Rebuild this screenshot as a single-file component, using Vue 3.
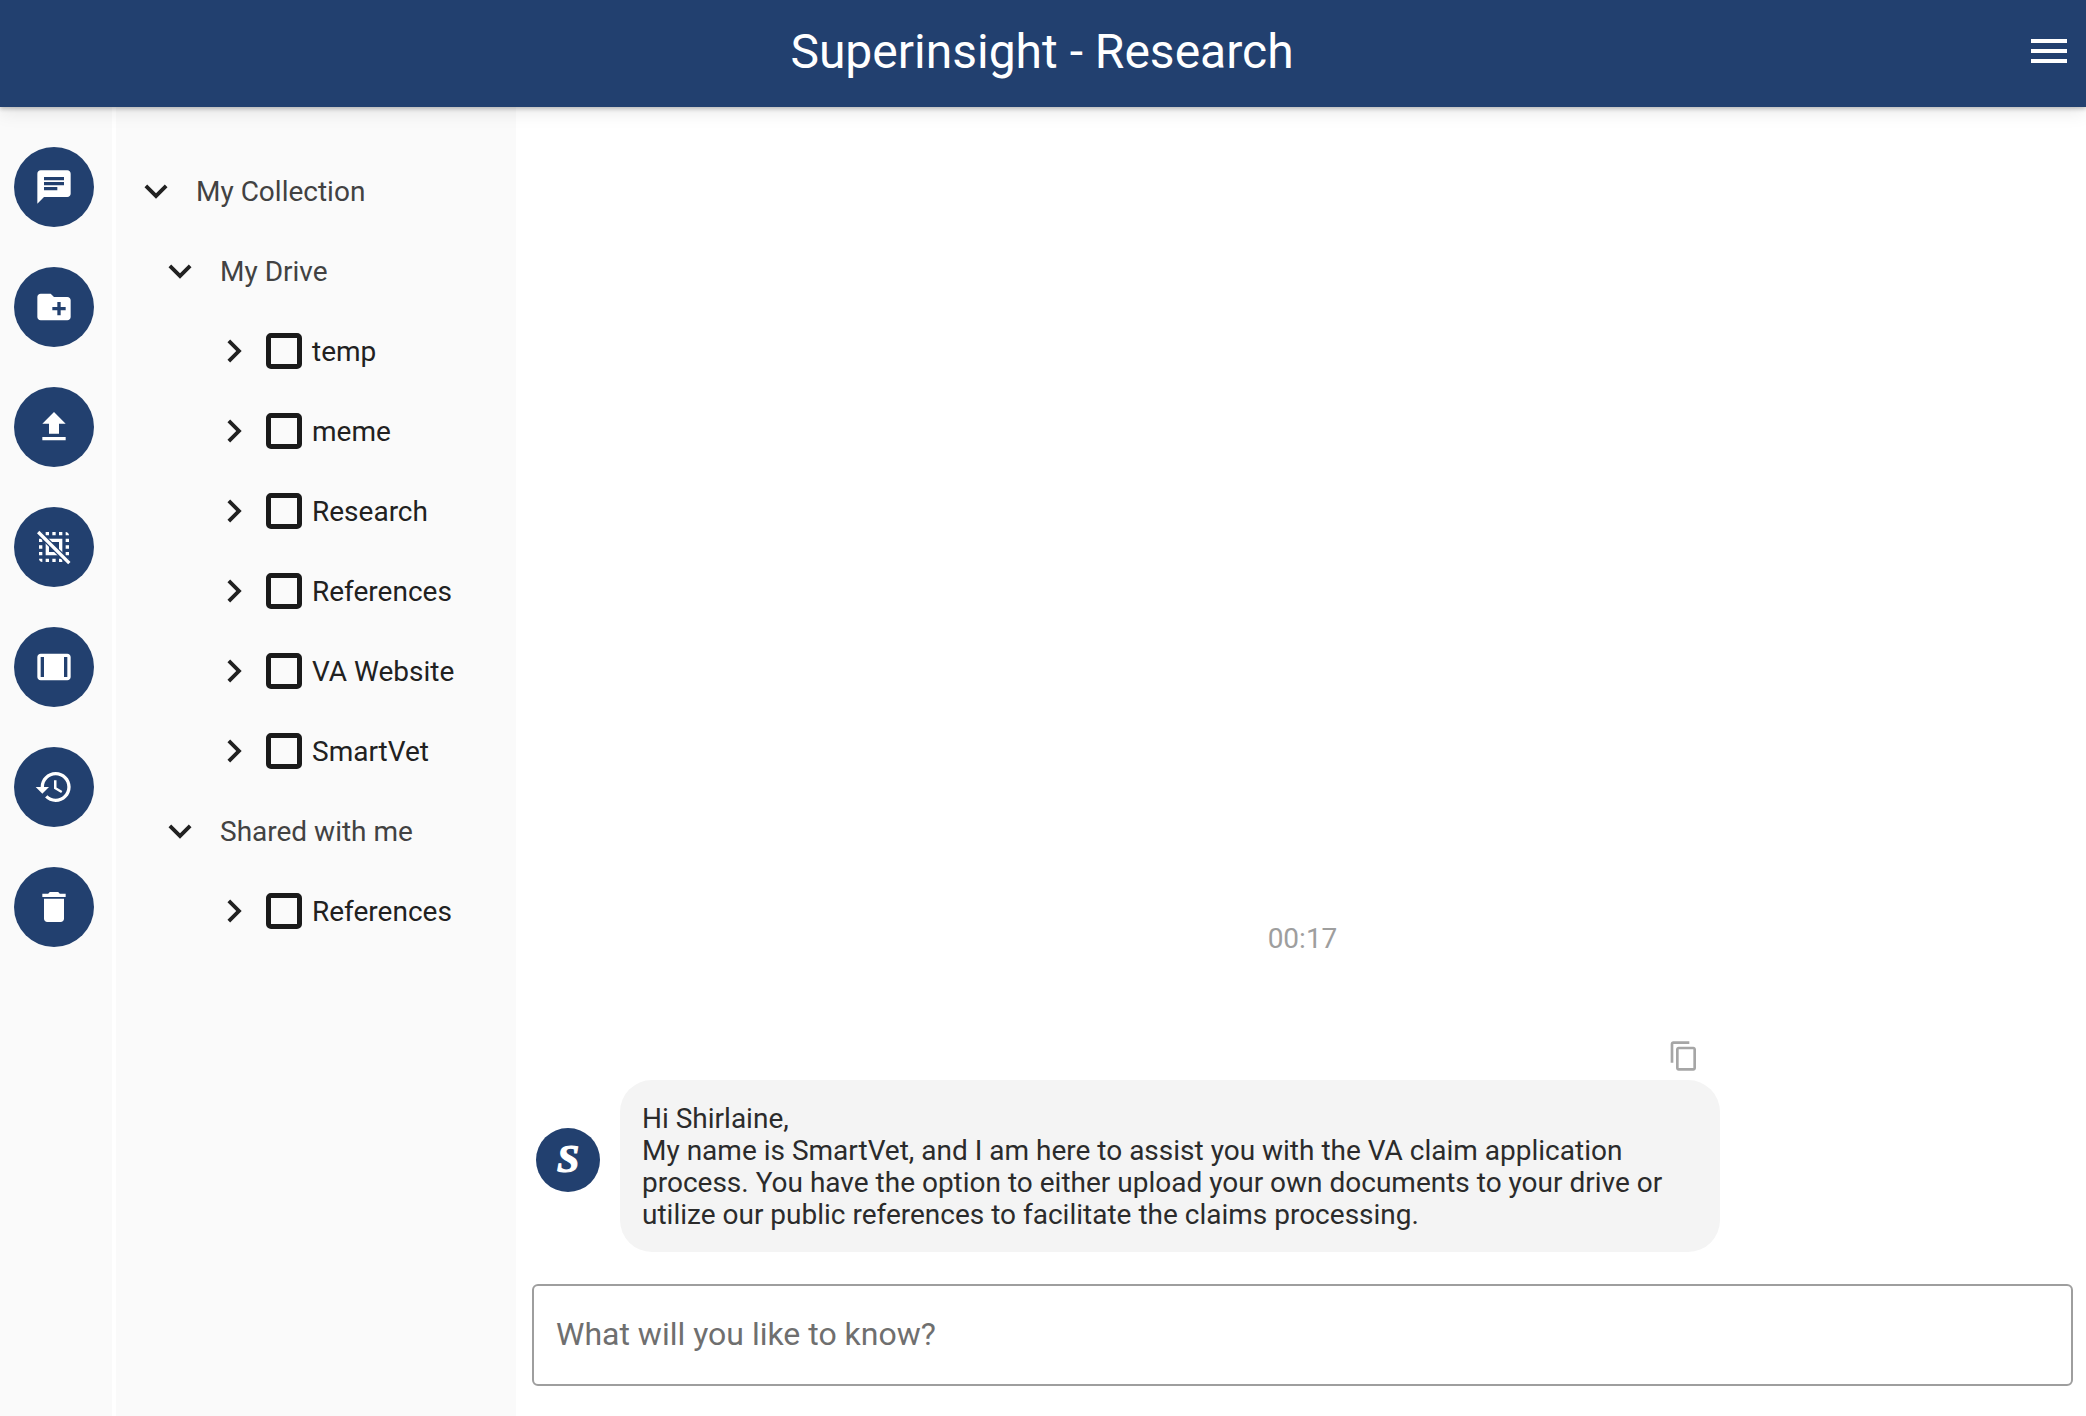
<script setup>
const railIcons = [
  { d: 'M20 2H4c-1.1 0-1.99.9-1.99 2L2 22l4-4h14c1.1 0 2-.9 2-2V4c0-1.1-.9-2-2-2zM6 9h12v2H6V9zm8 5H6v-2h8v2zm4-6H6V6h12v2z' },
  { d: 'M20 6h-8l-2-2H4c-1.11 0-1.99.89-1.99 2L2 18c0 1.11.89 2 2 2h16c1.11 0 2-.89 2-2V8c0-1.11-.89-2-2-2zm-1 8h-3v3h-2v-3h-3v-2h3V9h2v3h3v2z' },
  { d: 'M9 16h6v-6h4l-7-7-7 7h4zm-4 2h14v2H5z' },
  { d: 'M3 5h2V3c-1.1 0-2 .9-2 2zm0 8h2v-2H3v2zm4 8h2v-2H7v2zM3 9h2V7H3v2zm10-6h-2v2h2V3zm6 0v2h2c0-1.1-.9-2-2-2zM5 21v-2H3c0 1.1.9 2 2 2zm-2-4h2v-2H3v2zM9 3H7v2h2V3zm2 18h2v-2h-2v2zm8-8h2v-2h-2v2zm0 8c1.1 0 2-.9 2-2h-2v2zm0-12h2V7h-2v2zm0 8h2v-2h-2v2zm-4 4h2v-2h-2v2zm0-16h2V3h-2v2zM7 17h10V7H7v10zm2-8h6v6H9V9z', slash: true },
  { d: 'M20 4H4c-1.1 0-2 .9-2 2v12c0 1.1.9 2 2 2h16c1.1 0 2-.9 2-2V6c0-1.1-.9-2-2-2zM4 6h2v12H4V6zm14 12V6h2v12h-2z' },
  { d: 'M13 3c-4.97 0-9 4.03-9 9H1l3.89 3.89.07.14L9 12H6c0-3.87 3.13-7 7-7s7 3.13 7 7-3.13 7-7 7c-1.93 0-3.68-.79-4.94-2.06l-1.42 1.42C8.27 19.99 10.51 21 13 21c4.97 0 9-4.03 9-9s-4.03-9-9-9zm-1 5v5l4.28 2.54.72-1.21-3.5-2.08V8H12z' },
  { d: 'M6 19c0 1.1.9 2 2 2h8c1.1 0 2-.9 2-2V7H6v12zM19 4h-3.5l-1-1h-5l-1 1H5v2h14V4z' }
]
const folders = ['temp', 'meme', 'Research', 'References', 'VA Website', 'SmartVet']
</script>

<template>
  <div class="page">
    <header class="topbar">
      <h1 class="title">Superinsight - Research</h1>
      <button class="menu" aria-label="Menu">
        <span></span><span></span><span></span>
      </button>
    </header>
    <div class="body">
      <nav class="rail">
        <button v-for="icon in railIcons" :key="icon.d" class="fab">
          <svg viewBox="0 0 24 24" width="40" height="40">
            <path :d="icon.d" fill="#fff" fill-rule="evenodd" />
            <template v-if="icon.slash">
              <line x1="2.5" y1="3" x2="21.2" y2="21.7" stroke="#22406f" stroke-width="3.4" />
              <line x1="2.5" y1="3" x2="21.2" y2="21.7" stroke="#fff" stroke-width="2" />
            </template>
          </svg>
        </button>
      </nav>
      <aside class="tree">
        <div class="row group">
          <svg class="chev" viewBox="0 0 24 24"><path d="M16.59 8.59L12 13.17 7.41 8.59 6 10l6 6 6-6z" /></svg>
          <span>My Collection</span>
        </div>
        <div class="row group lvl1">
          <svg class="chev" viewBox="0 0 24 24"><path d="M16.59 8.59L12 13.17 7.41 8.59 6 10l6 6 6-6z" /></svg>
          <span>My Drive</span>
        </div>
        <div v-for="f in folders" :key="f" class="row leaf">
          <svg class="chev" viewBox="0 0 24 24"><path d="M10 6L8.59 7.41 13.17 12l-4.58 4.59L10 18l6-6z" /></svg>
          <i class="box"></i>
          <span>{{ f }}</span>
        </div>
        <div class="row group lvl1">
          <svg class="chev" viewBox="0 0 24 24"><path d="M16.59 8.59L12 13.17 7.41 8.59 6 10l6 6 6-6z" /></svg>
          <span>Shared with me</span>
        </div>
        <div class="row leaf">
          <svg class="chev" viewBox="0 0 24 24"><path d="M10 6L8.59 7.41 13.17 12l-4.58 4.59L10 18l6-6z" /></svg>
          <i class="box"></i>
          <span>References</span>
        </div>
      </aside>
      <main class="chat">
        <div class="time">00:17</div>
        <div class="copy-row">
          <svg viewBox="0 0 24 24" width="32" height="32"><path d="M16 1H4c-1.1 0-2 .9-2 2v14h2V3h12V1zm3 4H8c-1.1 0-2 .9-2 2v14c0 1.1.9 2 2 2h11c1.1 0 2-.9 2-2V7c0-1.1-.9-2-2-2zm0 16H8V7h11v14z" fill="#a6a6a6" /></svg>
        </div>
        <div class="message">
          <div class="avatar">S</div>
          <div class="bubble">Hi Shirlaine,<br />My name is SmartVet, and I am here to assist you with the VA claim application process. You have the option to either upload your own documents to your drive or utilize our public references to facilitate the claims processing.</div>
        </div>
        <input class="ask" type="text" placeholder="What will you like to know?" />
      </main>
    </div>
  </div>
</template>

<style>
html, body { margin: 0; background: #fff; }
</style>

<style scoped>
.page {
  width: 2086px;
  height: 1416px;
  display: flex;
  flex-direction: column;
  overflow: hidden;
  font-family: Roboto, "Liberation Sans", sans-serif;
  color: #212121;
}
.topbar {
  height: 107px;
  flex: none;
  position: relative;
  z-index: 2;
  background: #22406f;
  box-shadow: 0 2px 4px rgba(0,0,0,.22), 0 4px 18px rgba(0,0,0,.1);
  display: flex;
  align-items: center;
  justify-content: center;
}
.title {
  margin: 0 2px 5px 0;
  font-size: 48px;
  font-weight: 400;
  color: #fff;
}
.menu {
  position: absolute;
  right: 19px;
  top: 39px;
  padding: 0;
  border: 0;
  background: none;
  display: flex;
  flex-direction: column;
  gap: 6px;
}
.menu span {
  display: block;
  width: 36px;
  height: 4px;
  background: #fff;
}
.body { flex: 1; display: flex; min-height: 0; }
.rail {
  width: 112px;
  flex: none;
  box-sizing: border-box;
  background: #fafafa;
  padding: 40px 0 0 14px;
  display: flex;
  flex-direction: column;
  gap: 40px;
}
.fab {
  width: 80px;
  height: 80px;
  padding: 0;
  border: 0;
  border-radius: 50%;
  background: #22406f;
  display: flex;
  align-items: center;
  justify-content: center;
}
.tree {
  width: 404px;
  flex: none;
  box-sizing: border-box;
  border-left: 4px solid #fff;
  background: #fafafa;
  padding: 44px 0 0 0;
  font-size: 28px;
}
.row {
  height: 80px;
  display: flex;
  align-items: center;
  color: #212121;
}
.group { color: #424242; padding-left: 17px; }
.group span { margin-left: 17px; }
.lvl1 { padding-left: 41px; }
.leaf { padding-left: 95px; }
.chev { width: 46px; height: 46px; flex: none; fill: #212121; }
.leaf .chev { margin-right: 9px; }
.box {
  width: 36px;
  height: 36px;
  flex: none;
  box-sizing: border-box;
  border: 5px solid #1a1a1a;
  border-radius: 5px;
  margin-right: 10px;
}
.chat {
  flex: 1;
  min-width: 0;
  box-sizing: border-box;
  padding: 0 13px 30px 16px;
  display: flex;
  flex-direction: column;
  justify-content: flex-end;
}
.time {
  text-align: center;
  font-size: 28px;
  line-height: 32px;
  color: #9e9e9e;
  margin-bottom: 84px;
}
.copy-row {
  height: 41px;
  box-sizing: border-box;
  padding: 1px 0 0 1136px;
}
.message {
  display: flex;
  align-items: center;
  gap: 20px;
  padding-left: 4px;
  margin-bottom: 32px;
}
.avatar {
  width: 64px;
  height: 64px;
  flex: none;
  margin-top: -13px;
  border-radius: 50%;
  background: #22406f;
  color: #fff;
  font: italic 700 40px/62px "Liberation Serif", serif;
  -webkit-text-stroke: 1.2px #fff;
  text-align: center;
}
.bubble {
  width: 1100px;
  box-sizing: border-box;
  padding: 23px 22px 21px 22px;
  background: #f4f4f4;
  border-radius: 32px;
  font-size: 28px;
  line-height: 32px;
  color: #2b2b2b;
}
.ask {
  height: 102px;
  box-sizing: border-box;
  border: 2px solid #9e9e9e;
  border-radius: 6px;
  padding: 0 22px 2px;
  font: 32px Roboto, "Liberation Sans", sans-serif;
  outline: none;
  background: #fff;
}
.ask::placeholder { color: #6f6f6f; opacity: 1; }
</style>
